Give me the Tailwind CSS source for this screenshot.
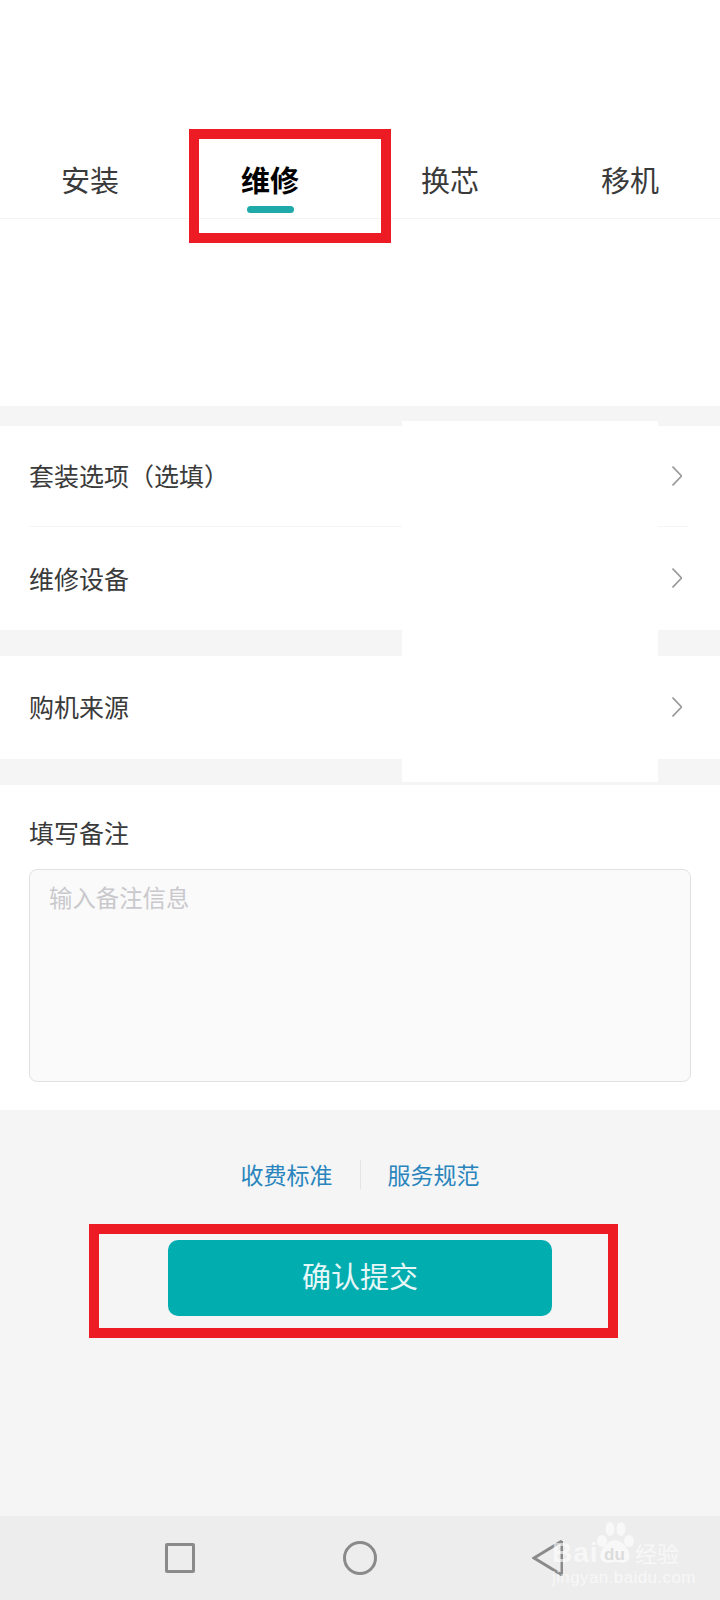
<!DOCTYPE html>
<html>

<head>
    <meta charset="UTF-8">
    <title>维修</title>
    <script src="https://cdn.jsdelivr.net/npm/@tailwindcss/browser@4"></script>
</head>

<body class="bg-[#f5f5f6] font-['Noto_Sans_CJK_SC','Liberation_Sans',sans-serif] text-[#3a3a3a]">
    <div class="relative h-[1600px] w-[720px] overflow-hidden flex flex-col">
        <!-- tabs -->
        <header class="bg-white h-[406px] shrink-0">
            <div class="pt-[130px] h-[219px] grid grid-cols-4 border-b border-[#f4f4f4] text-center text-[29px]">
                <div class="pt-[28px] leading-[42px]">安装</div>
                <div class="pt-[28px] leading-[42px] font-bold text-black flex flex-col items-center">
                    维修
                    <span class="block w-[47px] h-[7px] rounded-full bg-[#1faaa9] mt-[6px]"></span>
                </div>
                <div class="pt-[28px] leading-[42px]">换芯</div>
                <div class="pt-[28px] leading-[42px]">移机</div>
            </div>
        </header>

        <section class="mt-[20px] bg-white shrink-0 text-[25px]">
            <div class="ml-[29px] mr-[32px] h-[101px] flex items-center justify-between border-b border-[#f6f6f6]">
                <span>套装选项（选填）</span>
                <svg class="mr-[6px]" width="10" height="20" viewBox="0 0 10 20" fill="none" stroke="#999" stroke-width="1.6"><path d="M0.5 0.5 L9.5 10 L0.5 19.5"/></svg>
            </div>
            <div class="ml-[29px] mr-[32px] h-[103px] flex items-center justify-between">
                <span>维修设备</span>
                <svg class="mr-[6px] -mt-[2px]" width="10" height="20" viewBox="0 0 10 20" fill="none" stroke="#999" stroke-width="1.6"><path d="M0.5 0.5 L9.5 10 L0.5 19.5"/></svg>
            </div>
        </section>

        <section class="mt-[26px] bg-white shrink-0 text-[25px]">
            <div class="ml-[29px] mr-[32px] h-[103px] flex items-center justify-between">
                <span class="-mt-[1px]">购机来源</span>
                <svg class="mr-[6px] -mt-[1px]" width="10" height="20" viewBox="0 0 10 20" fill="none" stroke="#999" stroke-width="1.6"><path d="M0.5 0.5 L9.5 10 L0.5 19.5"/></svg>
            </div>
        </section>

        <section class="mt-[26px] bg-white shrink-0 h-[325px] px-[29px] pt-[29px]">
            <h2 class="text-[25px] leading-[36px] font-normal">填写备注</h2>
            <div class="mt-[19px] h-[213px] bg-[#fafafa] border border-[#e2e2e2] rounded-lg px-[19px] pt-[11px] text-[23.4px] leading-[32px] text-[#c9c9cd]">输入备注信息</div>
        </section>

        <div class="mt-[48px] flex justify-center items-center text-[23px] leading-[32px] text-[#2a85bd] shrink-0">
            <span>收费标准</span>
            <span class="mx-[27px] w-px h-[29px] bg-[#e4e4e4]"></span>
            <span>服务规范</span>
        </div>

        <button class="mt-[50px] mx-auto w-[384px] h-[76px] pb-[4px] rounded-[10px] bg-[#02adb0] text-white/90 text-[29px] shrink-0">确认提交</button>

        <!-- android nav bar -->
        <nav class="mt-auto bg-[#ededed] h-[84px] shrink-0 relative">
            <div class="flex items-center h-full pl-[165px] pb-[1px]">
                <div class="w-[30px] h-[30px] border-[3px] border-[#8a8a8a] rounded-[2px]"></div>
                <div class="ml-[148px] w-[34px] h-[34px] border-[3px] border-[#8a8a8a] rounded-full"></div>
                <svg class="ml-[155px]" width="31" height="36" viewBox="0 0 31 36" fill="none" stroke="#8a8a8a" stroke-width="3"><path d="M30 1 V35 L2 18 L30 1"/></svg>
            </div>
        </nav>

        <!-- screenshot annotations -->
        <div class="absolute left-[189px] top-[129px] w-[202px] h-[114px] border-[10px] border-[#ed1c24]"></div>
        <div class="absolute left-[89px] top-[1224px] w-[529px] h-[114px] border-[10px] border-[#ed1c24]"></div>
        <div class="absolute left-[402px] top-[421px] w-[256px] h-[361px] bg-white"></div>

        <!-- watermark -->
        <div class="absolute left-[552px] top-[1522px] w-[140px] h-[64px] text-white/60 font-['Liberation_Sans',sans-serif]">
            <svg class="absolute left-[44px] top-0" width="38" height="42" viewBox="0 0 38 42" fill="#fff" fill-opacity="0.6">
                <ellipse cx="6" cy="19" rx="5" ry="6"/>
                <ellipse cx="14" cy="7" rx="4.5" ry="7"/>
                <ellipse cx="25" cy="7" rx="4.5" ry="7"/>
                <ellipse cx="33" cy="19" rx="5" ry="6"/>
                <path d="M19 18 C26 18 36 29 33 37 C30 43 24 40 19 40 C14 40 8 43 5 37 C2 29 12 18 19 18Z"/>
            </svg>
            <span class="absolute left-0 top-[16px] text-[28px] leading-[30px] font-bold tracking-[1px]">Bai</span>
            <span class="absolute left-[52px] top-[24px] text-[17px] leading-[18px] font-bold text-[#dcdcdc]">du</span>
            <span class="absolute left-[83px] top-[16px] text-[22px] leading-[28px] font-['Noto_Sans_CJK_SC',sans-serif]">经验</span>
            <span class="absolute left-0 top-[47px] text-[17px] leading-[18px] tracking-[0.4px] whitespace-nowrap">jingyan.baidu.com</span>
        </div>
    </div>
</body>

</html>
